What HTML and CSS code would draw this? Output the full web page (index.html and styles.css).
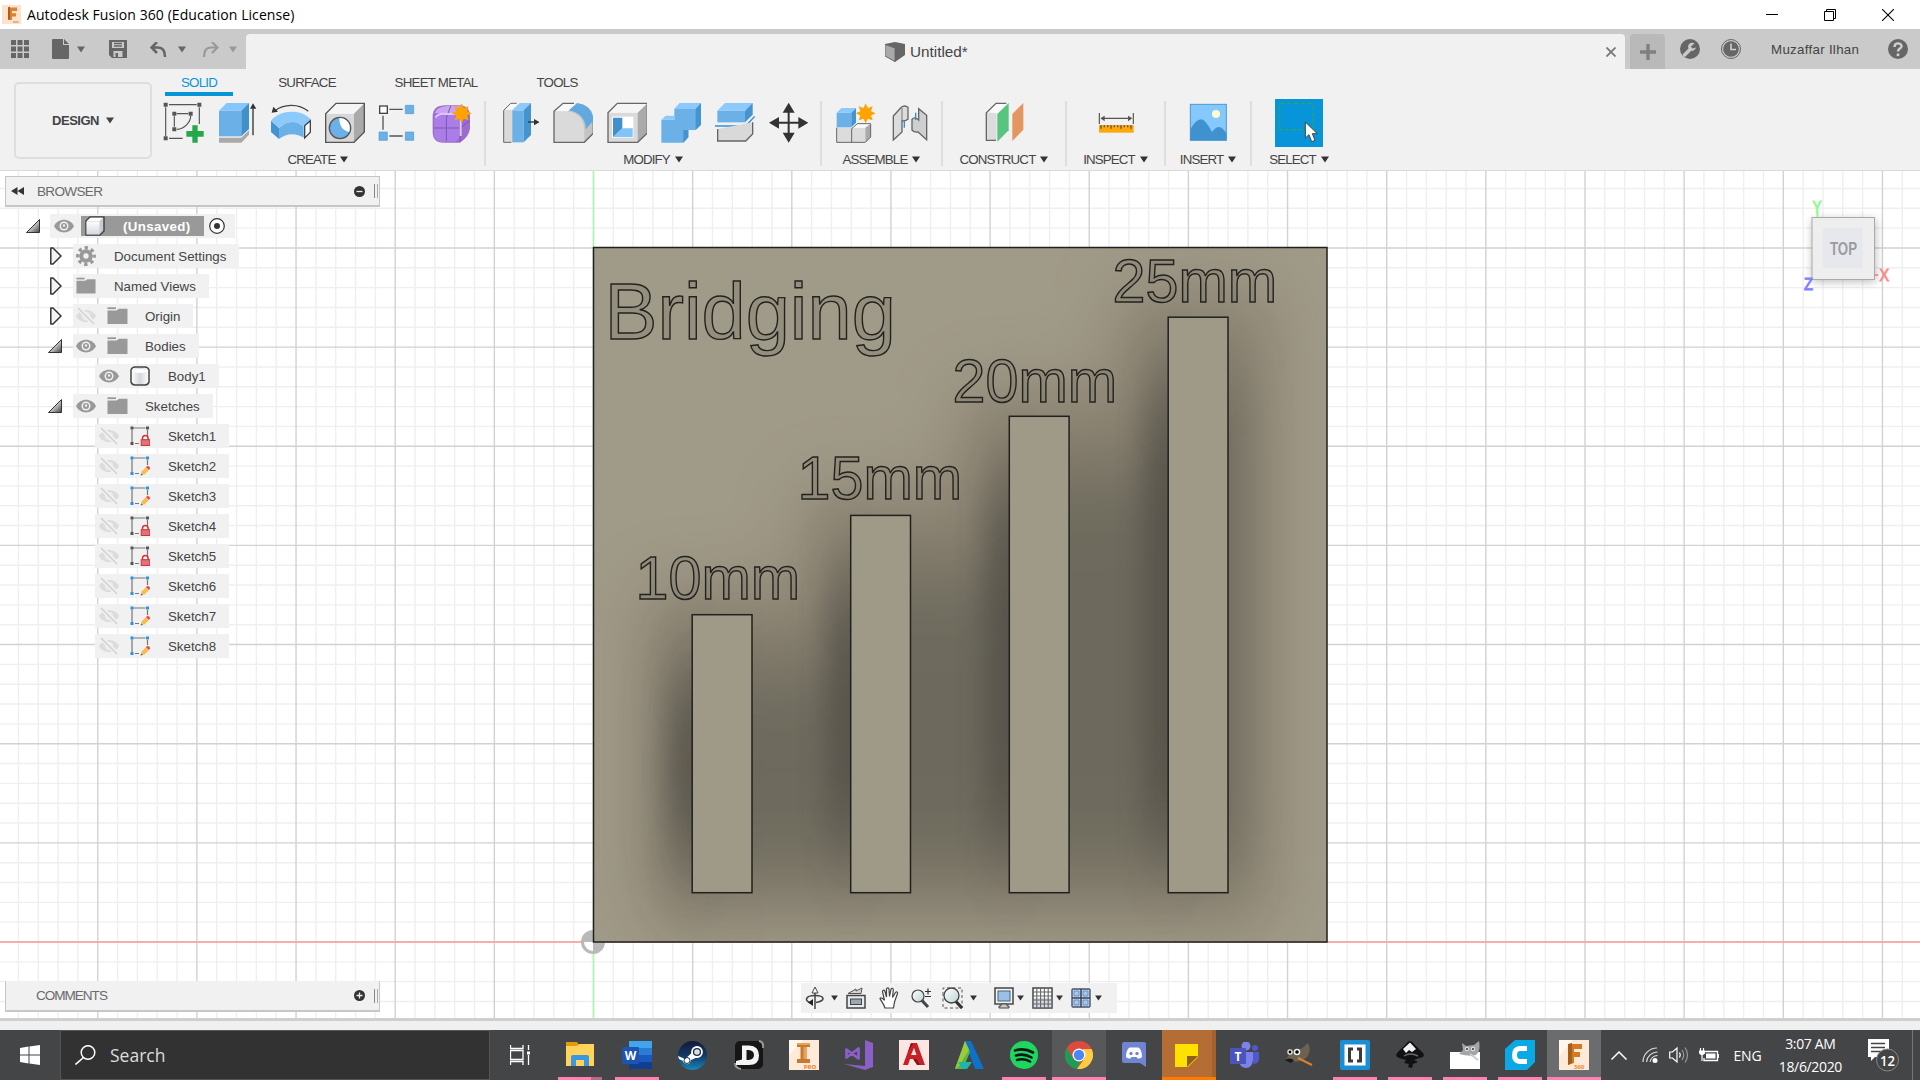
FILE: index.html
```html
<!DOCTYPE html>
<html lang="en">
<head>
<meta charset="utf-8">
<title>Autodesk Fusion 360 (Education License)</title>
<link rel="stylesheet" href="styles.css">
</head>
<body>
<svg class="defs" width="0" height="0">
  <defs>
    <linearGradient id="gTri" x1="0" y1="0" x2="1" y2="1"><stop offset=".35" stop-color="#eee"/><stop offset="1" stop-color="#444"/></linearGradient>
    <linearGradient id="gBody" x1="0" x2="1"><stop offset="0" stop-color="#fff"/><stop offset=".5" stop-color="#d4d7de"/><stop offset="1" stop-color="#fff"/></linearGradient>
    <linearGradient id="gCube" x1="0" y1="0" x2="0" y2="1"><stop offset="0" stop-color="#fff"/><stop offset="1" stop-color="#d4d7de"/></linearGradient>
    <linearGradient id="gLens" x1="0" y1="0" x2="1" y2="1"><stop offset="0" stop-color="#fff"/><stop offset="1" stop-color="#bcd4d4"/></linearGradient>
  </defs>
  <symbol id="caret" viewBox="0 0 8 7"><path d="M0 .5H8L4 6.5z" fill="currentColor"/></symbol>
  <symbol id="open" viewBox="0 0 14 14"><path d="M13.5 .5V13.5H.5z" fill="url(#gTri)" stroke="#333" stroke-width="1"/></symbol>
  <symbol id="closed" viewBox="0 0 14 18"><path d="M2.8 1H5L13 9L5 17H2.8z" fill="#f2f3f6" stroke="#333" stroke-width="1.5" stroke-linejoin="round"/></symbol>
  <symbol id="eye" viewBox="0 0 20 14"><path d="M0 7C4-1.5 16-1.5 20 7C16 15.500 4 15.500 0 7z" fill="#999"/><circle cx="10" cy="7" r="4.500" fill="#f0f0f0"/><circle cx="10" cy="7" r="3" fill="#999"/><circle cx="10" cy="6.500" r="1.200" fill="#eee"/></symbol>
  <symbol id="eyeoff" viewBox="0 0 20 18"><path d="M0 9C4 1 16 1 20 9C16 17 4 17 0 9z" fill="#dcdcdc"/><circle cx="10" cy="9" r="4" fill="#eee"/><circle cx="10" cy="9" r="2.500" fill="#dcdcdc"/><path d="M1.500 0L18 17" stroke="#f0f0f0" stroke-width="5"/><path d="M2 1L18 17" stroke="#d2d2d2" stroke-width="1.600"/></symbol>
  <symbol id="folder" viewBox="0 0 21 18"><path d="M.500 1.200H9" stroke="#999" stroke-width="1.800"/><path d="M.500 3.500H9.500L12 1.800H20.500V17H.500z" fill="#999"/></symbol>
  <symbol id="gear" viewBox="-10 -10 20 20"><circle r="4.700" fill="none" stroke="#999" stroke-width="4"/><circle r="8.200" fill="none" stroke="#999" stroke-width="3.400" stroke-dasharray="3.300 3.140" stroke-dashoffset="1.600"/></symbol>
  <symbol id="skLock" viewBox="0 0 20 20"><path d="M3.500 2H15.500M2 3.500V16M17.500 4V10M5 17.500H9" stroke="#777" stroke-width="1.200" fill="none"/><path d="M.500 .500h3v3h-3zM16 .500h3v3h-3zM.500 16h3v3h-3z" fill="#555"/><path d="M12.500 14V12.500a2.800 3 0 0 1 5.600 0V14" fill="none" stroke="#cf3338" stroke-width="1.500"/><rect x="11.200" y="13.700" width="8.600" height="5.800" fill="#de7377" stroke="#cf3338"/></symbol>
  <symbol id="skPen" viewBox="0 0 20 20"><path d="M3.500 2H15.500M2 3.500V16M17.500 4V9M5 17.500H9" stroke="#777" stroke-width="1.200" fill="none"/><path d="M.500 .500h3v3h-3zM16 .500h3v3h-3zM.500 16h3v3h-3z" fill="#2a92e0"/><path d="M12.500 17.500L17 13" stroke="#fbbc45" stroke-width="4"/><path d="M17.300 12.700L19.200 10.800" stroke="#f34848" stroke-width="4"/><path d="M10.500 19.500l2.500-.400-1.500-2z" fill="#666"/></symbol>
  <symbol id="burst" viewBox="-10 -10 20 20"><path d="M0-10L2.100-5.400L7-7L5.400-2.100L10 0L5.400 2.100L7 7L2.100 5.400L0 10L-2.100 5.400L-7 7L-5.400 2.100L-10 0L-5.400-2.100L-7-7L-2.100-5.400z" fill="#ffa300"/></symbol>
</svg>

<header class="titlebar">
  <svg class="applogo" width="19" height="19" viewBox="0 0 19 19"><rect width="19" height="19" fill="#fde3cd"/><path d="M6 2.500H15V6H10V8.300H14V11.500H10V15H6z" fill="#d9822f"/><path d="M6 2.500L8 1.500V14L6 15z" fill="#b05c16"/><path d="M11 17h5.500" stroke="#eb9b52" stroke-width="1.500"/></svg>
  <span class="apptitle">Autodesk Fusion 360 (Education License)</span>
  <div class="winbtns">
    <svg width="12" height="12" viewBox="0 0 12 12"><path d="M0 5.500H12" stroke="#000"/></svg>
    <svg width="12" height="12" viewBox="0 0 12 12"><path d="M.500 2.500H9.500V11.500H.500zM2.500 2V.500H11.500V9.500H10" fill="none" stroke="#000"/></svg>
    <svg width="12" height="12" viewBox="0 0 12 12"><path d="M0 0L12 12M12 0L0 12" stroke="#000" stroke-width="1.100"/></svg>
  </div>
</header>

<div class="tabstrip">
  <div class="quick">
    <svg width="18" height="18" viewBox="0 0 18 18"><path d="M0 0h5v5H0zM6.500 0h5v5h-5zM13 0h5v5h-5zM0 6.500h5v5H0zM6.500 6.500h5v5h-5zM13 6.500h5v5h-5zM0 13h5v5H0zM6.500 13h5v5h-5zM13 13h5v5h-5z" fill="#666"/></svg>
    <svg class="q-file" width="17" height="20" viewBox="0 0 17 20"><path d="M1 0H11V6H17V19a1 1 0 0 1-1 1H1a1 1 0 0 1-1-1V1A1 1 0 0 1 1 0zM12 0L17 5H12z" fill="#666"/></svg>
    <svg class="q-c1" width="8" height="7"><use href="#caret"/></svg>
    <svg class="q-save" width="18" height="18" viewBox="0 0 18 18"><path fill-rule="evenodd" d="M0 0H18V18H3L0 15zM3 2V8H15V2zM4.500 11V17H13.500V11z" fill="#666"/><path d="M5 3.500H13M5 6H13" stroke="#666" stroke-width="1.300"/><rect x="6.500" y="13" width="2.500" height="5" fill="#666"/></svg>
    <svg class="q-undo" width="17" height="15" viewBox="0 0 17 15"><path d="M7 0L1.500 5.500L7 11M2 5.500H8C13 5.500 15 9 15 15" fill="none" stroke="#666" stroke-width="2.500"/></svg>
    <svg class="q-c2" width="8" height="7"><use href="#caret"/></svg>
    <svg class="q-redo" width="17" height="15" viewBox="0 0 17 15"><path d="M10 0L15.500 5.500L10 11M15 5.500H9C4 5.500 2 9 2 15" fill="none" stroke="#999" stroke-width="2.200"/></svg>
    <svg class="q-c3" width="8" height="7"><use href="#caret"/></svg>
  </div>
  <div class="doctab">
    <div class="docname">
      <svg width="20" height="20" viewBox="0 0 20 20"><path d="M0 2L10 0L20 2V13L10 20L0 14z" fill="#666"/><path d="M0 2.500L10 6V19.500L0 14z" fill="#a9a9a9" stroke="#666" stroke-width=".8"/></svg>
      <span>Untitled*</span>
    </div>
    <svg class="docclose" width="10" height="10" viewBox="0 0 10 10"><path d="M.500 .500L9.500 9.500M9.500 .500L.500 9.500" stroke="#777" stroke-width="1.800"/></svg>
  </div>
  <div class="newtab"><svg width="16" height="16" viewBox="0 0 16 16"><path d="M8 0V16M0 8H16" stroke="#808080" stroke-width="3.400"/></svg></div>
  <div class="account">
    <svg width="20" height="20" viewBox="0 0 20 20"><circle cx="10" cy="10" r="10" fill="#666"/><path d="M4.500 16L10.500 10" stroke="#cacaca" stroke-width="3.500" stroke-linecap="round"/><path d="M14.500 4.500A4 4 0 1 0 16 8.500L12.500 9.500L10.800 7.500z" fill="#cacaca"/></svg>
    <svg width="20" height="20" viewBox="0 0 20 20"><circle cx="10" cy="10" r="9.500" fill="none" stroke="#666"/><circle cx="10" cy="10" r="7.800" fill="#666"/><path d="M10 4.500V10.500H15" fill="none" stroke="#d0d0d0" stroke-width="1.600"/></svg>
    <span class="user">Muzaffar Ilhan</span>
    <svg width="20" height="20" viewBox="0 0 20 20"><circle cx="10" cy="10" r="10" fill="#666"/><path d="M6.500 8C6.500 3 13.800 3.500 13.500 7.500C13.300 9.800 10 9.500 10 12.500" fill="none" stroke="#d0d0d0" stroke-width="2.400"/><circle cx="10" cy="15.700" r="1.500" fill="#d0d0d0"/></svg>
  </div>
</div>

<div class="ribbon">
  <div class="workspace">DESIGN<svg width="8" height="7"><use href="#caret"/></svg></div>
  <div class="ribbon-main">
    <nav class="modes">
      <span class="mode active">SOLID</span>
      <span class="mode surface">SURFACE</span>
      <span class="mode sheet">SHEET METAL</span>
      <span class="mode tools-tab">TOOLS</span>
    </nav>
    <div class="groups">
      <section class="group g-create">
        <div class="icons">
          <svg viewBox="486 303 126 126"><path d="M507 314H590M497 322V408M507 415H548M598 322V372M530 341H565M523 349V380M572 348C572 365 555 386 531 388" fill="none" stroke="#555" stroke-width="3.500"/><path d="M491 308h12v12h-12zM592 308h12v12h-12zM491 409h12v12h-12zM517 335h12v12h-12zM566 335h12v12h-12zM517 382h12v12h-12z" fill="#555"/><path d="M577 376h16v17h18v17h-18v18h-16v-18h-18v-17h18z" fill="#25a84a"/></svg>
          <svg viewBox="648 303 126 126"><path d="M657 413H724L747 391V404L724 428H657z" fill="#a9a9a9"/><path d="M657 332H724V409H657z" fill="#6bb1e8"/><path d="M657 332L680 309H747L724 332z" fill="#85c6fb"/><path d="M747 309V387L724 409V332z" fill="#4090cc"/><path d="M759 325V406" stroke="#333" stroke-width="4"/><path d="M750 326L759 310L769 326z" fill="#333"/></svg>
          <svg viewBox="810 303 126 126"><path d="M813 362L837 384V417L813 396z" fill="#4394d1"/><path d="M813 362C840 328 905 326 933 359L911 380C890 360 860 362 837 384z" fill="#8bcafb"/><path d="M837 384C860 361 890 360 911 380V413C890 399 860 398 837 417z" fill="#6bb1e8"/><path d="M914 377L931 362V397L914 414z" fill="#fff" stroke="#444" stroke-width="4"/><path d="M824 333C850 312 895 309 925 334" fill="none" stroke="#444" stroke-width="4"/><path d="M815 338L820 320L834 335z" fill="#333"/></svg>
          <svg viewBox="972 303 126 126"><path d="M977 341H1062V427H977z" fill="#d7d7d7"/><path d="M977 341L1008 310H1093L1062 341z" fill="#f5f5f5"/><path d="M1093 310V396L1062 427V341z" fill="#aaa"/><path d="M977 341L1008 310H1093V396L1062 427H977z" fill="none" stroke="#555" stroke-width="4"/><circle cx="1020" cy="384" r="32" fill="#6bb1e8" stroke="#555" stroke-width="4"/><path d="M1018 354A30 30 0 0 1 1047 396C1028 392 1018 378 1018 354z" fill="#fff"/></svg>
          <svg viewBox="1134 303 126 126"><path d="M1168 328H1208M1149 347V389M1168 408H1208" stroke="#555" stroke-width="4"/><rect x="1139" y="318" width="23" height="22" fill="#fff" stroke="#444" stroke-width="4"/><path d="M1216 316h25v25h-25zM1137 396h25v25h-25zM1216 396h25v25h-25z" fill="#6bb1e8" stroke="#4d9bd6" stroke-width="2"/></svg>
          <svg viewBox="1296 303 126 126"><path d="M1298 350Q1298 316 1336 316H1375Q1410 316 1410 350V385Q1408 410 1380 428H1330Q1298 428 1298 395z" fill="#9c6bd0"/><path d="M1303 340Q1310 320 1340 318H1372Q1392 318 1400 335L1378 340H1335z" fill="#c9a5ef"/><rect x="1302" y="340" width="78" height="85" rx="20" fill="#aa7ee6"/><path d="M1302 384H1380L1410 362M1339 424V355L1352 318M1380 345V425" fill="none" stroke="#8055b5" stroke-width="3"/><path d="M1306 352Q1318 338 1338 342H1376L1382 350V408" fill="none" stroke="#e0c5ff" stroke-width="6"/><use href="#burst" x="1355" y="310" width="60" height="60"/></svg>
        </div>
        <div class="label">CREATE<svg width="8" height="7"><use href="#caret"/></svg></div>
      </section>
      <section class="group g-modify">
        <div class="icons">
          <svg viewBox="45 63 126 126"><path d="M65 91L87 70H103V187H65z" fill="#d9d9d9"/><path d="M68 89L89 70H112L91 90z" fill="#f8f8f8"/><path d="M88 187H65V91L86 70H104" fill="none" stroke="#666" stroke-width="3"/><path d="M91 91H125V187H91z" fill="#6bb1e8"/><path d="M91 91L113 69H147L125 91z" fill="#8bcafb"/><path d="M147 69V165L125 187V91z" fill="#4394d1"/><path d="M138 126H158" stroke="#333" stroke-width="4"/><path d="M156 117L173 126L156 136z" fill="#333"/></svg>
          <svg viewBox="213 63 126 126"><path d="M222 94L250 70H292L340 122V160L313 187H222z" fill="#c4c4c4"/><path d="M222 94H262Q310 100 313 148V187H222z" fill="#dadada"/><path d="M222 94L249 70H290L264 94z" fill="#f9f9f9"/><path d="M340 160L313 187H222V94L249 70H282M340 122V160" fill="none" stroke="#666" stroke-width="4"/><path d="M267 91L292 69Q338 75 341 121L318 147Q314 99 267 91z" fill="#62a9df"/></svg>
          <svg viewBox="375 63 126 126"><path d="M384 98H473V187H384z" fill="#dadada"/><path d="M384 98L412 70H502L473 98z" fill="#f5f5f5"/><path d="M502 70V159L473 187V98z" fill="#aaa"/><path d="M384 98L412 70H502V159L473 187H384z" fill="none" stroke="#666" stroke-width="4"/><path d="M396 110H460V174H396z" fill="#fff"/><path d="M399 113H427V145L399 172z" fill="#4190cb"/><path d="M399 172L427 145H458V172z" fill="#82c4f6"/></svg>
          <svg viewBox="537 63 126 126"><path d="M544 119H583V87L600 69H664V133L647 150H625V172L610 188H544z" fill="#6bb1e8"/><path d="M544 119L557 107H583V119zM583 87L600 69H664L647 87z" fill="#8bcafb"/><path d="M664 69V133L647 150V87zM625 150V172L610 188V150z" fill="#4394d1"/></svg>
          <svg viewBox="699 63 126 126"><path d="M712 92H795V127H712z" fill="#6bb1e8"/><path d="M712 92L735 69H818L795 92z" fill="#8bcafb"/><path d="M818 69V104L795 127V92z" fill="#4394d1"/><path d="M705 138H797L824 109" fill="none" stroke="#328fdb" stroke-width="4"/><path d="M713 147V183H797L818 162V127" fill="#d9d9d9" stroke="#666" stroke-width="4"/></svg>
          <svg viewBox="861 63 126 126"><path d="M926 85V172M884 128H968" stroke="#333" stroke-width="6"/><path d="M908 98L926 68L944 98zM908 158L926 188L944 158zM897 111L867 128L897 146zM955 111L985 128L955 146z" fill="#333"/></svg>
        </div>
        <div class="label">MODIFY<svg width="8" height="7"><use href="#caret"/></svg></div>
      </section>
      <section class="group g-assemble">
        <div class="icons">
          <svg viewBox="1062 63 126 126"><path d="M1070 143H1115V187H1070zM1115 143H1156V187H1115z" fill="#dcdcdc"/><path d="M1115 143L1130 131H1172L1156 143z" fill="#f9f9f9"/><path d="M1172 131V171L1156 187V143z" fill="#aaa"/><path d="M1070 143V187H1156L1172 171V131H1132L1115 146V187" fill="none" stroke="#666" stroke-width="3"/><path d="M1070 98H1114V142H1070z" fill="#6bb1e8"/><path d="M1070 98L1084 84H1128L1114 98z" fill="#8bcafb"/><path d="M1128 84V128L1114 142V98z" fill="#4394d1"/><use href="#burst" x="1127" y="70" width="60" height="60"/></svg>
          <svg viewBox="1224 63 126 126"><path d="M1240 108L1264 82Q1274 74 1284 82V118Q1275 125 1266 122V156L1240 180z" fill="#dcdcdc" stroke="#666" stroke-width="4"/><path d="M1266 84V122" stroke="#777" stroke-width="3"/><path d="M1296 118Q1304 108 1316 120V86L1340 106V179L1314 156Q1302 158 1296 150z" fill="#cfcfcf" stroke="#666" stroke-width="4"/><path d="M1273 124V143M1307 98V120" stroke="#2b8ede" stroke-width="4"/></svg>
        </div>
        <div class="label">ASSEMBLE<svg width="8" height="7"><use href="#caret"/></svg></div>
      </section>
      <section class="group g-construct">
        <div class="icons">
          <svg viewBox="490 213 126 126"><path d="M500 247H530V331H500z" fill="#dcdcdc"/><path d="M500 247L529 219H563L533 250z" fill="#fafafa"/><path d="M529 331H500V248L529 220H560" fill="none" stroke="#666" stroke-width="4"/><path d="M533 252L567 219V301L533 335z" fill="#57c580"/><path d="M578 252L611 219V299L578 333z" fill="#e3965f"/></svg>
        </div>
        <div class="label">CONSTRUCT<svg width="8" height="7"><use href="#caret"/></svg></div>
      </section>
      <section class="group g-inspect">
        <div class="icons">
          <svg viewBox="825 213 126 126"><path d="M838 249V282M940 249V282M848 265H930" stroke="#555" stroke-width="3.500"/><path d="M841 265L854 257V274zM937 265L924 257V274z" fill="#555"/><rect x="837" y="285" width="104" height="23" fill="#ffa70b"/><path d="M843 286v10M853 286v6M863 286v6M873 286v10M883 286v6M893 286v6M903 286v10M913 286v6M923 286v6M933 286v10" stroke="#555" stroke-width="4"/></svg>
        </div>
        <div class="label">INSPECT<svg width="8" height="7"><use href="#caret"/></svg></div>
      </section>
      <section class="group g-insert">
        <div class="icons">
          <svg viewBox="1101 213 126 126"><rect x="1111" y="223" width="108" height="108" fill="#85c8fb" stroke="#489bd4" stroke-width="3"/><path d="M1111 298Q1128 268 1143 268Q1156 268 1176 306Q1190 288 1200 292Q1208 294 1219 309V331H1111z" fill="#3f92cf"/><circle cx="1188" cy="252" r="12" fill="#fffbd0"/></svg>
        </div>
        <div class="label">INSERT<svg width="8" height="7"><use href="#caret"/></svg></div>
      </section>
      <section class="group g-select">
        <div class="icons">
          <svg class="big" viewBox="1365 207 144 144"><rect x="1365" y="207" width="144" height="144" fill="#0894d8"/><rect x="1379" y="221" width="101" height="78" fill="none" stroke="#2aa95c" stroke-width="3.500" stroke-dasharray="14 7"/><path d="M1456 276V324L1467 314L1475 335L1485 331L1477 311H1492z" fill="#fff" stroke="#444" stroke-width="3"/></svg>
        </div>
        <div class="label">SELECT<svg width="8" height="7"><use href="#caret"/></svg></div>
      </section>
    </div>
  </div>
</div>

<main class="canvas">
  <svg class="scene" width="1920" height="848" viewBox="0 171 1920 848">
    <defs>
      <clipPath id="plateClip"><rect x="593.500" y="247.500" width="733.500" height="694.500"/></clipPath>
      <filter id="soft" filterUnits="userSpaceOnUse" x="400" y="100" width="1100" height="1000"><feGaussianBlur stdDeviation="24 42"/></filter>
      <filter id="tight" filterUnits="userSpaceOnUse" x="400" y="100" width="1100" height="1000"><feGaussianBlur stdDeviation="14 48"/></filter>
      <filter id="wide" filterUnits="userSpaceOnUse" x="300" y="0" width="1300" height="1200"><feGaussianBlur stdDeviation="34 36"/></filter>
    </defs>
    <g id="grid"></g>
    <path d="M0 942H1920" stroke="#ff9d9d" stroke-width="1.300"/>
    <path d="M593.500 171V1019" stroke="#9dff9d" stroke-width="1.300"/>
    <circle cx="593" cy="942" r="12" fill="#b9b9b9"/><path d="M593 942H584A9 9 0 0 0 593 951z" fill="#fff"/>
    <g clip-path="url(#plateClip)">
      <rect x="593" y="247" width="735" height="696" fill="#a09a88"/>
      <path d="M645 590H800V490H958V390H1115V290H1275V920H645z" fill="#6a5e50" opacity=".38" filter="url(#wide)"/>
      <path d="M668 665H835V570H993V470H1152V370H1246V875H668z" fill="#4c4e45" opacity=".46" filter="url(#soft)"/>
      <g fill="#3c3834" filter="url(#tight)" opacity=".44">
        <rect x="668" y="690" width="44" height="150"/>
        <rect x="826" y="590" width="44" height="245"/>
        <rect x="984" y="495" width="44" height="340"/>
        <rect x="1143" y="400" width="44" height="435"/>
      </g>
    </g>
    <g fill="#9f9987" stroke="#20201d" stroke-width="1.500">
      <rect x="593.500" y="247.500" width="733.500" height="694.500" fill="none"/>
      <rect x="692.200" y="614.700" width="59.800" height="278"/>
      <rect x="850.700" y="515.400" width="59.800" height="377.300"/>
      <rect x="1009.300" y="416.300" width="59.800" height="476.400"/>
      <rect x="1168.200" y="317.200" width="59.800" height="575.500"/>
    </g>
    <g class="engraved">
      <text transform="translate(604.500 339)" font-size="79.400">Bridging</text>
      <text transform="translate(635.500 598.600) scale(1 1.035)" font-size="59.300">10mm</text>
      <text transform="translate(797.500 498.600) scale(1 1.035)" font-size="59.300">15mm</text>
      <text transform="translate(952.500 402) scale(1 1.035)" font-size="59.300">20mm</text>
      <text transform="translate(1112.500 301.700) scale(1 1.035)" font-size="59.300">25mm</text>
    </g>
  </svg>

  <aside class="browser">
    <div class="panel-head">
      <svg width="13" height="8" viewBox="0 0 13 8"><path d="M6.500 0V8L0 4zM13 0V8L6.500 4z" fill="#333"/></svg>
      <span>BROWSER</span>
      <svg class="toggle" width="11" height="11" viewBox="0 0 11 11"><circle cx="5.500" cy="5.500" r="5.500" fill="#333"/><path d="M2.500 5.500H8.500" stroke="#eee" stroke-width="1.300"/></svg>
      <i class="grip"></i>
    </div>
    <ul class="tree">
      <li class="l1"><svg class="arr" width="14" height="14"><use href="#open"/></svg><div class="item root"><svg width="20" height="14"><use href="#eye"/></svg><div class="selected"><svg width="20" height="20" viewBox="0 0 20 20"><path d="M1 5L5 1H19V15L15 19H1z" fill="#c8cbd3" stroke="#444" stroke-width="1.500" stroke-linejoin="round"/><path d="M1.500 5.500H14.500V18.500H1.500z" fill="url(#gCube)"/><path d="M2 5L5.500 1.800H18L14.500 5z" fill="#fff"/></svg><span>(Unsaved)</span></div><svg width="16" height="16" viewBox="0 0 16 16"><circle cx="8" cy="8" r="7.300" fill="#fff" stroke="#333" stroke-width="1.200"/><circle cx="8" cy="8" r="3" fill="#333"/></svg></div></li>
      <li class="l2"><svg class="arr" width="14" height="18"><use href="#closed"/></svg><div class="item"><svg width="20" height="20"><use href="#gear"/></svg><span>Document Settings</span></div></li>
      <li class="l2"><svg class="arr" width="14" height="18"><use href="#closed"/></svg><div class="item"><svg width="20" height="18"><use href="#folder"/></svg><span>Named Views</span></div></li>
      <li class="l2"><svg class="arr" width="14" height="18"><use href="#closed"/></svg><div class="item"><svg width="20" height="18"><use href="#eyeoff"/></svg><svg class="kind" width="21" height="18"><use href="#folder"/></svg><span>Origin</span></div></li>
      <li class="l2"><svg class="arr" width="14" height="14"><use href="#open"/></svg><div class="item"><svg width="20" height="14"><use href="#eye"/></svg><svg class="kind" width="21" height="18"><use href="#folder"/></svg><span>Bodies</span></div></li>
      <li class="l3"><div class="item"><svg width="20" height="14"><use href="#eye"/></svg><svg class="kind" width="20" height="20" viewBox="0 0 20 20"><path d="M1 4Q2 1 5 1H15Q18 1 19 4V16Q18 19 15 19H5Q2 19 1 16z" fill="url(#gBody)" stroke="#444" stroke-width="1.500"/><path d="M2 5Q10 1 18 5Q10 9 2 5z" fill="#fff"/></svg><span>Body1</span></div></li>
      <li class="l2"><svg class="arr" width="14" height="14"><use href="#open"/></svg><div class="item"><svg width="20" height="14"><use href="#eye"/></svg><svg class="kind" width="21" height="18"><use href="#folder"/></svg><span>Sketches</span></div></li>
      <li class="l3"><div class="item"><svg width="20" height="18"><use href="#eyeoff"/></svg><svg class="kind" width="20" height="20"><use href="#skLock"/></svg><span>Sketch1</span></div></li>
      <li class="l3"><div class="item"><svg width="20" height="18"><use href="#eyeoff"/></svg><svg class="kind" width="20" height="20"><use href="#skPen"/></svg><span>Sketch2</span></div></li>
      <li class="l3"><div class="item"><svg width="20" height="18"><use href="#eyeoff"/></svg><svg class="kind" width="20" height="20"><use href="#skPen"/></svg><span>Sketch3</span></div></li>
      <li class="l3"><div class="item"><svg width="20" height="18"><use href="#eyeoff"/></svg><svg class="kind" width="20" height="20"><use href="#skLock"/></svg><span>Sketch4</span></div></li>
      <li class="l3"><div class="item"><svg width="20" height="18"><use href="#eyeoff"/></svg><svg class="kind" width="20" height="20"><use href="#skLock"/></svg><span>Sketch5</span></div></li>
      <li class="l3"><div class="item"><svg width="20" height="18"><use href="#eyeoff"/></svg><svg class="kind" width="20" height="20"><use href="#skPen"/></svg><span>Sketch6</span></div></li>
      <li class="l3"><div class="item"><svg width="20" height="18"><use href="#eyeoff"/></svg><svg class="kind" width="20" height="20"><use href="#skPen"/></svg><span>Sketch7</span></div></li>
      <li class="l3"><div class="item"><svg width="20" height="18"><use href="#eyeoff"/></svg><svg class="kind" width="20" height="20"><use href="#skPen"/></svg><span>Sketch8</span></div></li>
    </ul>
  </aside>

  <div class="comments panel-head">
    <span>COMMENTS</span>
    <svg class="toggle" width="11" height="11" viewBox="0 0 11 11"><circle cx="5.500" cy="5.500" r="5.500" fill="#333"/><path d="M2.500 5.500H8.500M5.500 2.500V8.500" stroke="#eee" stroke-width="1.300"/></svg>
    <i class="grip"></i>
  </div>

  <div class="viewcube">
    <svg width="110" height="110" viewBox="1790 190 110 110">
      <defs><filter id="cubeShadow" x="-30%" y="-30%" width="160%" height="160%"><feGaussianBlur stdDeviation="4"/></filter></defs>
      <rect x="1812" y="219" width="64" height="63" fill="#000" opacity=".25" filter="url(#cubeShadow)"/>
      <path d="M1817.500 213V217" stroke="#8f8" stroke-width="2"/><path d="M1874 275H1878" stroke="#f88" stroke-width="2"/>
      <rect x="1812" y="217.500" width="62.500" height="62" fill="#eee" stroke="#aaa"/>
      <rect x="1823" y="228" width="40" height="40" fill="#e6e8ed"/>
      <text x="1830" y="255" font-size="19" font-weight="bold" fill="#9b9ca2" textLength="27" lengthAdjust="spacingAndGlyphs">TOP</text>
      <text x="1812.500" y="213" font-size="17" fill="#8dfa8d" stroke="#8dfa8d" textLength="9" lengthAdjust="spacingAndGlyphs">Y</text>
      <text x="1879.500" y="281" font-size="17" fill="#ff8b8b" stroke="#ff8b8b" textLength="9.500" lengthAdjust="spacingAndGlyphs">X</text>
      <text x="1804" y="289.500" font-size="17" fill="#8080ff" stroke="#8080ff" textLength="9" lengthAdjust="spacingAndGlyphs">Z</text>
    </svg>
  </div>

  <div class="navbar">
    <svg class="n" width="20" height="22" viewBox="0 0 20 22"><path d="M10 5V22" stroke="#444" stroke-width="1.500"/><path d="M7 6L10 0L13 6z" fill="#fff" stroke="#444"/><path d="M6 16C-1 14 0 8.500 10 8.500S21 14 11 15.500" fill="none" stroke="#444" stroke-width="1.600"/><path d="M3 15.500L8 12V19z" fill="#222"/></svg>
    <svg class="c c1" width="7" height="6"><use href="#caret"/></svg>
    <svg class="n n2" width="20" height="22" viewBox="0 0 20 22"><rect x="1" y="8.500" width="18" height="12.500" fill="#e6ebf0" stroke="#444" stroke-width="1.500"/><rect x="4.500" y="12" width="11" height="5.500" fill="#9ba9ae" stroke="#444"/><path d="M2 6.500L10 2V4L16 1L15 6.500z" fill="#cfd5d9" stroke="#555"/></svg>
    <svg class="n n3" width="20" height="22" viewBox="0 0 20 22"><path d="M6 21C5 17 1.500 13.500 1 11.500C2 10 4 11.500 5.500 13.500L3.500 4.500C4 2.500 5.500 3 6 4.500L7.500 10L7.500 2C8 .300 9.800 .500 10 2L10.500 9.500L12 2.200C12.800 .800 14.500 1.500 14.300 3L13.500 10.500L16.500 5.500C17.500 4.200 19 5 18.500 6.500L15.500 15L14.500 21z" fill="#fff" stroke="#444" stroke-width="1.200"/></svg>
    <svg class="n n4" width="20" height="22" viewBox="0 0 20 22"><path d="M11 13.500L17 20" stroke="#444" stroke-width="3"/><circle cx="7" cy="9" r="6" fill="url(#gLens)" stroke="#444" stroke-width="1.200"/><path d="M14 4.500H20M17 1.500V7.500M14 9.500H20" stroke="#333" stroke-width="1.200"/></svg>
    <svg class="n n5" width="22" height="22" viewBox="0 0 22 22"><path d="M1 8V1H20V21H1z" fill="none" stroke="#555" stroke-dasharray="3 2.500"/><path d="M14 14.500L20 21" stroke="#333" stroke-width="3.200"/><circle cx="9.500" cy="8.500" r="7.500" fill="url(#gLens)" stroke="#444" stroke-width="1.300"/></svg>
    <svg class="c c2" width="7" height="6"><use href="#caret"/></svg>
    <svg class="n n6" width="20" height="22" viewBox="0 0 20 22"><rect x="1" y="1" width="18" height="16" fill="#f2f2f2" stroke="#444" stroke-width="1.500"/><rect x="4" y="4" width="12" height="10" fill="#9bbfe8" stroke="#467"/><path d="M7 17H13V19H15V21H5V19H7z" fill="#ccc" stroke="#444"/></svg>
    <svg class="c c3" width="7" height="6"><use href="#caret"/></svg>
    <svg class="n n7" width="21" height="22" viewBox="0 0 21 22"><rect x="1" y="1" width="19" height="20" fill="#fff" stroke="#444" stroke-width="1.500"/><rect x="1" y="11" width="19" height="10" fill="#8b97b5" opacity=".35"/><path d="M4.800 1V21M8.600 1V21M12.400 1V21M16.200 1V21M1 5H20M1 9H20M1 13H20M1 17H20" stroke="#666" stroke-width="1.100"/></svg>
    <svg class="c c4" width="7" height="6"><use href="#caret"/></svg>
    <svg class="n n8" width="20" height="20" viewBox="0 0 20 20"><rect x="1" y="1" width="18" height="18" rx="1" fill="#cfdbf0" stroke="#456" stroke-width="1.400"/><path d="M10 1V19M1 10H19" stroke="#345" stroke-width="1.500"/><path d="M3 3H8V8H3zM12 3H17V8H12zM3 12H8V17H3zM12 12H17V17H12z" fill="#a9c4ee" stroke="#6b8dc0"/></svg>
    <svg class="c c5" width="7" height="6"><use href="#caret"/></svg>
  </div>
</main>
<div class="statusline"></div>

<footer class="taskbar">
  <div class="start"><svg width="20" height="20" viewBox="0 0 20 20"><path d="M0 3L8.500 1.600V9.500H0zM9.500 1.400L20 0V9.500H9.500zM0 10.500H8.500V18.400L0 17zM9.500 10.500H20V20L9.500 18.600z" fill="#fff"/></svg></div>
  <div class="search"><svg width="21" height="20" viewBox="0 0 21 20"><circle cx="13" cy="7.500" r="6.800" fill="none" stroke="#fff" stroke-width="1.500"/><path d="M8.500 12.500L.500 19.500" stroke="#fff" stroke-width="1.600"/></svg><span>Search</span></div>
  <div class="taskview"><svg width="20" height="20" viewBox="0 0 20 20"><path d="M.500 0V3.500H13V0M.500 20V16.500H13V20M.500 5.500H13V14.500H.500zM18.500 0V5M18.500 10V20" fill="none" stroke="#fff" stroke-width="1.300"/><rect x="17" y="6.500" width="3" height="3" fill="#fff"/></svg></div>
  <div class="apps">
    <div class="app run double"><svg width="28" height="26" viewBox="0 0 28 26"><path d="M0 2H28V24H0z" fill="#ffd35c"/><path d="M0 0H11L13 3L10 4H0z" fill="#e39b0a"/><path d="M5 24V15Q5 13 7 13H21Q23 13 23 15V24H18V18H10V24z" fill="#3a97e0"/></svg></div>
    <div class="app run"><svg width="30" height="28" viewBox="0 0 30 28"><path d="M7 0H30V7H7z" fill="#41a5ee"/><path d="M7 7H30V14H7z" fill="#2b7cd3"/><path d="M7 14H30V21H7z" fill="#185abd"/><path d="M7 21H30V28H7z" fill="#103f91"/><rect y="6" width="17" height="17" rx="1" fill="#1d53b3"/><text x="8.500" y="19" font-size="12" font-weight="bold" text-anchor="middle" fill="#fff">W</text></svg></div>
    <div class="app"><svg width="29" height="29" viewBox="0 0 29 29"><defs><linearGradient id="gSteam" x1="0" y1="0" x2="0" y2="1"><stop offset="0" stop-color="#14183c"/><stop offset=".5" stop-color="#123a66"/><stop offset="1" stop-color="#1787b8"/></linearGradient></defs><circle cx="14.500" cy="14.500" r="14.500" fill="url(#gSteam)"/><path d="M0 15L7 18L17 9L22 15L13 19Q12 24 8 23Q5 22 5 20L1 18z" fill="#fff"/><circle cx="19" cy="11" r="5" fill="#16304f" stroke="#fff" stroke-width="1.800"/><circle cx="19" cy="11" r="2.800" fill="#ddd"/><circle cx="9" cy="19.500" r="3" fill="none" stroke="#234" stroke-width="1"/></svg></div>
    <div class="app nudge"><svg width="30" height="30" viewBox="0 0 30 30"><rect x="1" y="1" width="28" height="28" rx="5" fill="#161616"/><path d="M25 1Q30 2 29 8M1 23Q1 28 7 29" fill="none" stroke="#999" stroke-width="2"/><path fill-rule="evenodd" d="M8 5.500H15Q25 6 25 15.500T15 25H2V21L8 19.500zM12.500 10V20H14.500Q20 19.500 20 15T14.500 10z" fill="#f4f4f4"/></svg></div>
    <div class="app"><svg width="30" height="30" viewBox="0 0 30 30"><rect width="30" height="30" fill="#fdead8"/><path d="M0 0H14L0 16z" fill="#fff6ec"/><path d="M8 3H21V7H17.500V19H21V23H8V19H11.500V7H8z" fill="#c8782f"/><path d="M8 3H21V5H8zM14.500 7H17.500V19H14.500z" fill="#e5a35c"/><text x="21" y="28.500" font-size="6" font-weight="bold" text-anchor="middle" fill="#f07f1c">PRO</text></svg></div>
    <div class="app"><svg width="29" height="30" viewBox="0 0 29 30"><path d="M21 0L29 3V27L21 30L0 24L21 26z" fill="#8a5fc7"/><path d="M2.500 9.500V17.500L14.500 8.500V18.500z" fill="none" stroke="#8a5fc7" stroke-width="2.800" stroke-linejoin="round"/></svg></div>
    <div class="app"><svg width="30" height="30" viewBox="0 0 30 30"><rect width="30" height="30" fill="#fbe6e3"/><path d="M4 25L12 3H18L26 25H20.500L18.500 19H11L9 25z" fill="#c62127"/><path d="M15 8L17.500 15H12z" fill="#fbe6e3"/><path d="M14 19H18.500L21 25H18zM12 3L9 12L14 4z" fill="#8e1217"/></svg></div>
    <div class="app"><svg width="29" height="28" viewBox="0 0 29 28"><path d="M10 0H16L29 28H20z" fill="#0d72c9"/><path d="M10 0L15 11L8 28H0z" fill="#54b948"/><path d="M10 0L14 9L4 25L0 28z" fill="#9ccb3b"/><path d="M3 21H17L12 28H7z" fill="#1fb5a8"/></svg></div>
    <div class="app run"><svg width="28" height="28" viewBox="0 0 28 28"><circle cx="14" cy="14" r="14" fill="#1ed760"/><path d="M5 9.500Q14 6.500 23 11.500M6 14.500Q14 12 21.500 16.500M7 19Q14 17 20 20.500" fill="none" stroke="#161616" stroke-width="2.600" stroke-linecap="round"/></svg></div>
    <div class="app run hot"><svg width="28" height="28" viewBox="-14 -14 28 28"><circle r="14" fill="#dd4b3e"/><path d="M-12.100-7L-5.500 4.500L1 6L-2 13.900A14 14 0 0 1-12.100-7z" fill="#199e58"/><path d="M12.600-6A14 14 0 0 1-2 13.900L5.500 3.500L4-6z" fill="#ffcd42"/><circle r="6.500" fill="#fff"/><circle r="5.200" fill="#4688f4"/></svg></div>
    <div class="app"><svg width="24" height="26" viewBox="0 0 24 26"><path d="M2 0H22Q24 0 24 2V25L18 21H2Q0 21 0 19V2Q0 0 2 0z" fill="#6f85d4"/><path d="M4 15Q4 8 7.500 5.500H16.500Q20 8 20 15Q18 17 15.500 16.500L14.500 15H9.500L8.500 16.500Q6 17 4 15z" fill="#fff"/><circle cx="9" cy="11.500" r="1.700" fill="#6f85d4"/><circle cx="15" cy="11.500" r="1.700" fill="#6f85d4"/></svg></div>
    <div class="app note"><svg width="23" height="23" viewBox="0 0 23 23"><path d="M0 0H23V13L13 23H0z" fill="#ffe100"/><path d="M12 23V12H23z" fill="#8f5e1c"/></svg></div>
    <div class="app"><svg width="30" height="27" viewBox="0 0 30 27"><circle cx="16" cy="4" r="4.500" fill="#7b83eb"/><circle cx="25" cy="6" r="3" fill="#5059c9"/><path d="M9 10H23V18Q22 26 16 26T9 19z" fill="#7b83eb"/><path d="M23 10H29V18Q28 22 23 22z" fill="#5059c9"/><rect y="6" width="16" height="16" rx="1" fill="#4b53bc"/><text x="8" y="18.500" font-size="12" font-weight="bold" text-anchor="middle" fill="#fff">T</text></svg></div>
    <div class="app"><svg width="29" height="24" viewBox="0 0 29 24"><path d="M5 8Q13 10 23 0Q27 8 22 14Q16 20 8 18L1 16Q3 14 4 12z" fill="#6b6250"/><path d="M0 17Q4 14 9 17L6 20z" fill="#181818"/><circle cx="5" cy="9" r="2.700" fill="#eee"/><circle cx="12" cy="9" r="3.300" fill="#eee"/><circle cx="5" cy="9" r="1.400"/><circle cx="12" cy="9" r="1.800"/><path d="M13 15L27 22" stroke="#d9822a" stroke-width="2"/></svg></div>
    <div class="app run"><svg width="30" height="30" viewBox="0 0 30 30"><rect width="30" height="30" rx="2" fill="#1a8fd6"/><rect x="4.500" y="4.500" width="21" height="21" fill="#fff"/><path d="M13 9H9.500V21H13M17 9H20.500V21H17" fill="none" stroke="#3a3a3a" stroke-width="3"/></svg></div>
    <div class="app run"><svg width="30" height="30" viewBox="0 0 30 30"><path d="M15 1Q17 1 19 4L28 13Q31 17 24 18L19 20L23 22L18 24L17 28L13 27L14 24L9 23L11 20L4 18Q-1 16 3 12L11 4Q13 1 15 1z" fill="#111"/><path d="M15 2.500L21 9L17 12L14 10L11 13L8 9z" fill="#f2f2f2"/><path d="M9 16Q15 12 23 16" stroke="#667" stroke-width="1.500" fill="none"/></svg></div>
    <div class="app run"><svg width="30" height="28" viewBox="0 0 30 28"><path d="M0 11H30V28H0z" fill="#fff"/><path d="M12 2L16 5L24 4L29 0Q31 10 26 14Q20 16 9 13L13 9z" fill="#a5a5a5"/><circle cx="17" cy="8" r="2.200" fill="#ddd"/><circle cx="23" cy="8" r="2.200" fill="#ddd"/><circle cx="17" cy="8" r="1" fill="#333"/><circle cx="23" cy="8" r="1" fill="#333"/><path d="M20 13L28 19" stroke="#ccc" stroke-width="2"/></svg></div>
    <div class="app run"><svg width="30" height="30" viewBox="0 0 30 30"><path d="M10 0H30V22L22 30H0V9z" fill="#0ba8e6"/><path d="M22 6H14Q7 7 7 15T14 24H22V19H15Q12 19 12 15T15 11H22z" fill="#fff"/></svg></div>
    <div class="app run focus"><svg width="30" height="30" viewBox="0 0 30 30"><rect width="30" height="30" fill="#fdead8"/><path d="M0 0H14L0 16z" fill="#fff6ec"/><path d="M9 4H23V9H15V12H21V17H15V23L9 25z" fill="#d37a22"/><path d="M9 4L13 3V23L9 25z" fill="#a95e17"/><text x="20" y="28.500" font-size="6" font-weight="bold" text-anchor="middle" fill="#f0882c">360</text></svg></div>
  </div>
  <div class="tray">
    <svg class="t1" width="16" height="9" viewBox="0 0 16 9"><path d="M.500 8.500L8 1L15.500 8.500" fill="none" stroke="#fff" stroke-width="1.500"/></svg>
    <svg class="t2" width="16" height="16" viewBox="0 0 16 16"><path d="M1 15A14 14 0 0 1 15 1M4.500 15A11 11 0 0 1 15.500 5M8 15A8 8 0 0 1 15.500 8.500" fill="none" stroke="#ddd" stroke-width="1.200"/><circle cx="13" cy="13.500" r="2.500" fill="#fff"/></svg>
    <svg class="t3" width="20" height="18" viewBox="0 0 20 18"><path d="M.700 6H3.500L8 2V16L3.500 12H.700z" fill="none" stroke="#fff" stroke-width="1.200"/><path d="M10.500 6.500Q12 9 10.500 11.500" fill="none" stroke="#fff" stroke-width="1.300"/><path d="M13 4Q16.500 9 13 14M16 1.500Q21 9 16 16.500" fill="none" stroke="#999" stroke-width="1.200"/></svg>
    <svg class="t4" width="20" height="14" viewBox="0 0 20 14"><path d="M6 3.500H18.500V12.500H5V10" fill="none" stroke="#fff" stroke-width="1.300"/><rect x="7" y="5.500" width="9.500" height="5" fill="#fff"/><path d="M19.500 6V10M1.500 0V3M4.500 0V3M3 6V13" stroke="#fff" stroke-width="1.200"/><path d="M0 2.500H6V5.500L4 7H2L0 5.500z" fill="#fff"/></svg>
    <span class="lang">ENG</span>
    <div class="clock"><span class="time">3:07 AM</span><span class="date">18/6/2020</span></div>
    <svg class="t5" width="34" height="34" viewBox="0 0 34 34"><path d="M1 1H22V19H8L4 23V19H1z" fill="#fff"/><path d="M4 5.500H18M4 9.500H18M4 13.500H14" stroke="#444" stroke-width="1.400"/><circle cx="20.500" cy="22" r="11" fill="#444" stroke="#888"/><text x="20.500" y="27.500" font-size="15" font-weight="600" text-anchor="middle" fill="#fff" textLength="15" lengthAdjust="spacingAndGlyphs">12</text></svg>
    <i class="peek"></i>
  </div>
</footer>
<script src="script.js"></script>
</body>
</html>
```
FILE: styles.css
```css
* { box-sizing: border-box; }
body { margin: 0; width: 1920px; height: 1080px; overflow: hidden; display: flex; flex-direction: column; background: #f0f0f0; color: #444; font: 13.3px "Liberation Sans", Arial, sans-serif; }
svg { display: block; flex: none; }
.defs { position: absolute; }

.titlebar { height: 29px; flex: none; background: #fff; display: flex; align-items: center; padding-left: 2px; }
.apptitle { margin-left: 6px; font: 14px/28px "Open Sans", sans-serif; color: #000; letter-spacing: 0.07px; white-space: nowrap; }
.winbtns { margin-left: auto; display: flex; gap: 46px; padding-right: 26px; }

.tabstrip { height: 40px; flex: none; background: #cacaca; display: flex; align-items: flex-end; }
.quick { width: 246px; height: 40px; padding-left: 11px; display: flex; align-items: center; color: #666; }
.q-file { margin-left: 23px; }
.q-c1 { margin-left: 8px; }
.q-save { margin-left: 24px; }
.q-undo { margin-left: 23px; }
.q-c2 { margin-left: 11px; }
.q-redo { margin-left: 16px; }
.q-c3 { margin-left: 10px; color: #999; }
.doctab { width: 1379px; height: 35px; background: #f1f1f1; border-radius: 4px 4px 0 0; display: flex; align-items: center; }
.docname { margin-left: 639px; display: flex; align-items: center; gap: 5px; font-size: 15.3px; }
.doctab .docclose { margin: 0 9px 0 auto; }
.newtab { width: 35px; height: 35px; margin-left: 5px; background: #b9b9b9; border-radius: 4px 4px 0 0; display: flex; align-items: center; justify-content: center; }
.account { height: 40px; flex: 1; padding-left: 15px; display: flex; align-items: center; gap: 21px; }
.user { margin-left: 9px; width: 96px; letter-spacing: 0.3px; white-space: nowrap; }

.ribbon { height: 102px; flex: none; display: flex; background: #f1f1f1; border-bottom: 1px solid #d9d9d9; }
.workspace { width: 138px; height: 77px; margin: 13px 0 0 14px; border: 2px solid #dedede; border-radius: 5px; display: flex; align-items: center; justify-content: center; gap: 7px; font-weight: bold; font-size: 13px; letter-spacing: -0.5px; color: #444; }
.modes { height: 32px; display: flex; font-size: 13.3px; letter-spacing: -0.75px; }
.mode { height: 27px; padding-top: 6px; text-align: center; white-space: nowrap; }
.mode.active { width: 68px; margin-left: 13px; color: #0696d7; border-bottom: 4px solid #0696d7; }
.mode.surface { width: 80px; margin-left: 34px; }
.mode.sheet { width: 110px; margin-left: 34px; }
.mode.tools-tab { width: 60px; margin-left: 36px; }
.groups { display: flex; height: 66px; }
.group { display: flex; flex-direction: column; align-items: center; border-right: 2px solid #dedede; height: 65px; }
.g-create { width: 334px; }
.g-modify { width: 336px; }
.g-assemble { width: 121px; }
.g-construct { width: 124px; }
.g-inspect { width: 99px; }
.g-insert { width: 86px; }
.g-select { width: 94px; border-right: 0; }
.icons { display: flex; gap: 12px; height: 42px; align-items: center; }
.icons svg { width: 42px; height: 42px; }
.icons svg.big { width: 48px; height: 48px; margin: -2px 0 -4px; }
.label { margin-top: 8.5px; display: flex; align-items: center; gap: 5px; font-size: 13.3px; letter-spacing: -0.85px; line-height: 16px; white-space: nowrap; }
.label svg { color: #333; }

.canvas { position: relative; height: 847px; flex: none; background: #fff; overflow: hidden; }
.minor { stroke: #efefef; stroke-width: 1.4; }
.major { stroke: #d2d2d2; stroke-width: 1.4; }
.engraved text { font-family: "Liberation Sans", Arial, sans-serif; fill: #7d786a; fill-opacity: .35; stroke: #22221e; stroke-width: 1.4; }
.viewcube text { font-family: "Liberation Sans", Arial, sans-serif; }

.browser { position: absolute; left: 5px; top: 5px; width: 375px; }
.panel-head { width: 375px; height: 31px; background: #f1f1f1; border: 1px solid #c6c6c6; border-width: 1px 1px 2px; display: flex; align-items: center; padding-left: 5px; color: #6b6b6b; }
.panel-head span { margin-left: 13px; letter-spacing: -0.7px; font-size: 13.6px; }
.panel-head .toggle { margin-left: auto; }
.grip { width: 4px; height: 14px; margin: 0 1px 0 9px; border-left: 1px solid #888; border-right: 1px solid #aaa; }
.comments { position: absolute; left: 5px; top: 810px; border-top: 0; }
.comments span { margin-left: 25px; letter-spacing: -1.05px; }
.tree { list-style: none; margin: 7px 0 0 -5px; padding: 0; display: flex; flex-direction: column; gap: 6px; }
.tree li { display: flex; align-items: center; height: 24px; }
.l1 { padding-left: 26px; }
.l2 { padding-left: 48px; }
.l3 { padding-left: 95px; }
.l1 .arr { margin-right: 10px; }
.l2 .arr { margin-right: 11px; }
.item { height: 24px; background: #f1f1f1; display: flex; align-items: center; padding: 0 13px 0 4px; white-space: nowrap; }
.l2 .item { padding-left: 3px; }
.item > span { margin-left: 18px; }
.kind { margin-left: 11px; }
.l2 .kind + span { margin-left: 17px; }
.item.root { width: 185px; padding-right: 0; }
.selected { width: 123px; height: 20px; margin: 0 5px 0 7px; padding-left: 4px; background: #999; color: #fff; font-weight: bold; display: flex; align-items: center; }
.selected span { margin-left: 18px; letter-spacing: .35px; }

.viewcube { position: absolute; left: 1790px; top: 19px; }
.navbar { position: absolute; left: 801px; top: 812px; width: 316px; height: 30px; background: #f1f1f1; display: flex; align-items: center; padding-left: 4px; color: #333; }
.c1 { margin-left: 6px; }
.n2 { margin-left: 8px; }
.n3 { margin-left: 13px; }
.n4 { margin-left: 12px; }
.n5 { margin-left: 11px; }
.c2 { margin-left: 6px; }
.n6 { margin-left: 17px; }
.c3 { margin-left: 3px; }
.n7 { margin-left: 8px; }
.c4 { margin-left: 3px; }
.n8 { margin-left: 8px; }
.c5 { margin-left: 4px; }

.statusline { height: 12px; flex: none; background: #f0f0f0; border-top: 3px solid #cfcfcf; }

.taskbar { height: 50px; flex: none; background: #444546; color: #fff; display: flex; font-family: "Open Sans", sans-serif; }
.start { width: 60px; display: flex; align-items: center; justify-content: center; }
.search { width: 430px; background: #323232; border: 1px solid #555; display: flex; align-items: center; padding-left: 14px; gap: 14px; font-size: 17.5px; color: #ddd; }
.taskview { width: 62.4px; padding-left: 20px; display: flex; align-items: center; }
.apps { display: flex; width: 1049px; }
.app { width: 55.1px; flex: none; display: flex; align-items: center; justify-content: center; }
.nudge { margin-left: 1.5px; }
.run { width: 44px; margin: 0 5.55px; background: linear-gradient(#ff80b5, #ff80b5) 0 100% / 100% 3px no-repeat; }
.double { margin-right: 7.5px; background: linear-gradient(90deg, #ff80b5 76%, #b8688d 76%) 0 100% / 100% 3px no-repeat; }
.hot, .focus { width: 54px; margin: 0 .55px; background-color: #575859; }
.focus { background-color: #6b6c6d; margin-left: -1px; }
.note { width: 54px; margin: 0 .55px; padding-right: 5px; background: linear-gradient(#ff7a00, #ff7a00) 0 100% / 100% 3px no-repeat, linear-gradient(90deg, #b56d36 50px, #a3622c 50px); }
.app text { font-family: "Open Sans", sans-serif; }
.tray { flex: 1; display: flex; align-items: center; }
.t1 { margin-left: 10px; }
.t2 { margin-left: 15px; }
.t3 { margin-left: 11px; }
.t4 { margin-left: 10px; }
.lang { margin-left: 14px; width: 29px; font-size: 14px; letter-spacing: -0.1px; }
.clock { width: 68px; margin-left: 14px; display: flex; flex-direction: column; align-items: center; font-size: 14px; line-height: 23px; letter-spacing: -0.35px; white-space: nowrap; }
.t5 { margin-left: 23px; }
.peek { width: 1px; height: 50px; background: #777; margin-left: 11px; }
```
FILE: script.js
```javascript
// Draws the workplane grid: ten-unit major lines, five minor cells each.
const grid = document.getElementById('grid');
const step = 19.83, ox = 593.5, oy = 942;
function line(x1, y1, x2, y2, cls) {
  const el = document.createElementNS('http://www.w3.org/2000/svg', 'line');
  el.setAttribute('x1', x1); el.setAttribute('y1', y1);
  el.setAttribute('x2', x2); el.setAttribute('y2', y2);
  el.setAttribute('class', cls);
  grid.appendChild(el);
}
for (const major of [false, true]) {
  for (let k = -29; k <= 66; k++) {
    if ((k % 5 === 0) === major) line(ox + k * step, 171, ox + k * step, 1019, major ? 'major' : 'minor');
  }
  for (let k = -3; k <= 38; k++) {
    if ((k % 5 === 0) === major) line(0, oy - k * step, 1920, oy - k * step, major ? 'major' : 'minor');
  }
}
```
